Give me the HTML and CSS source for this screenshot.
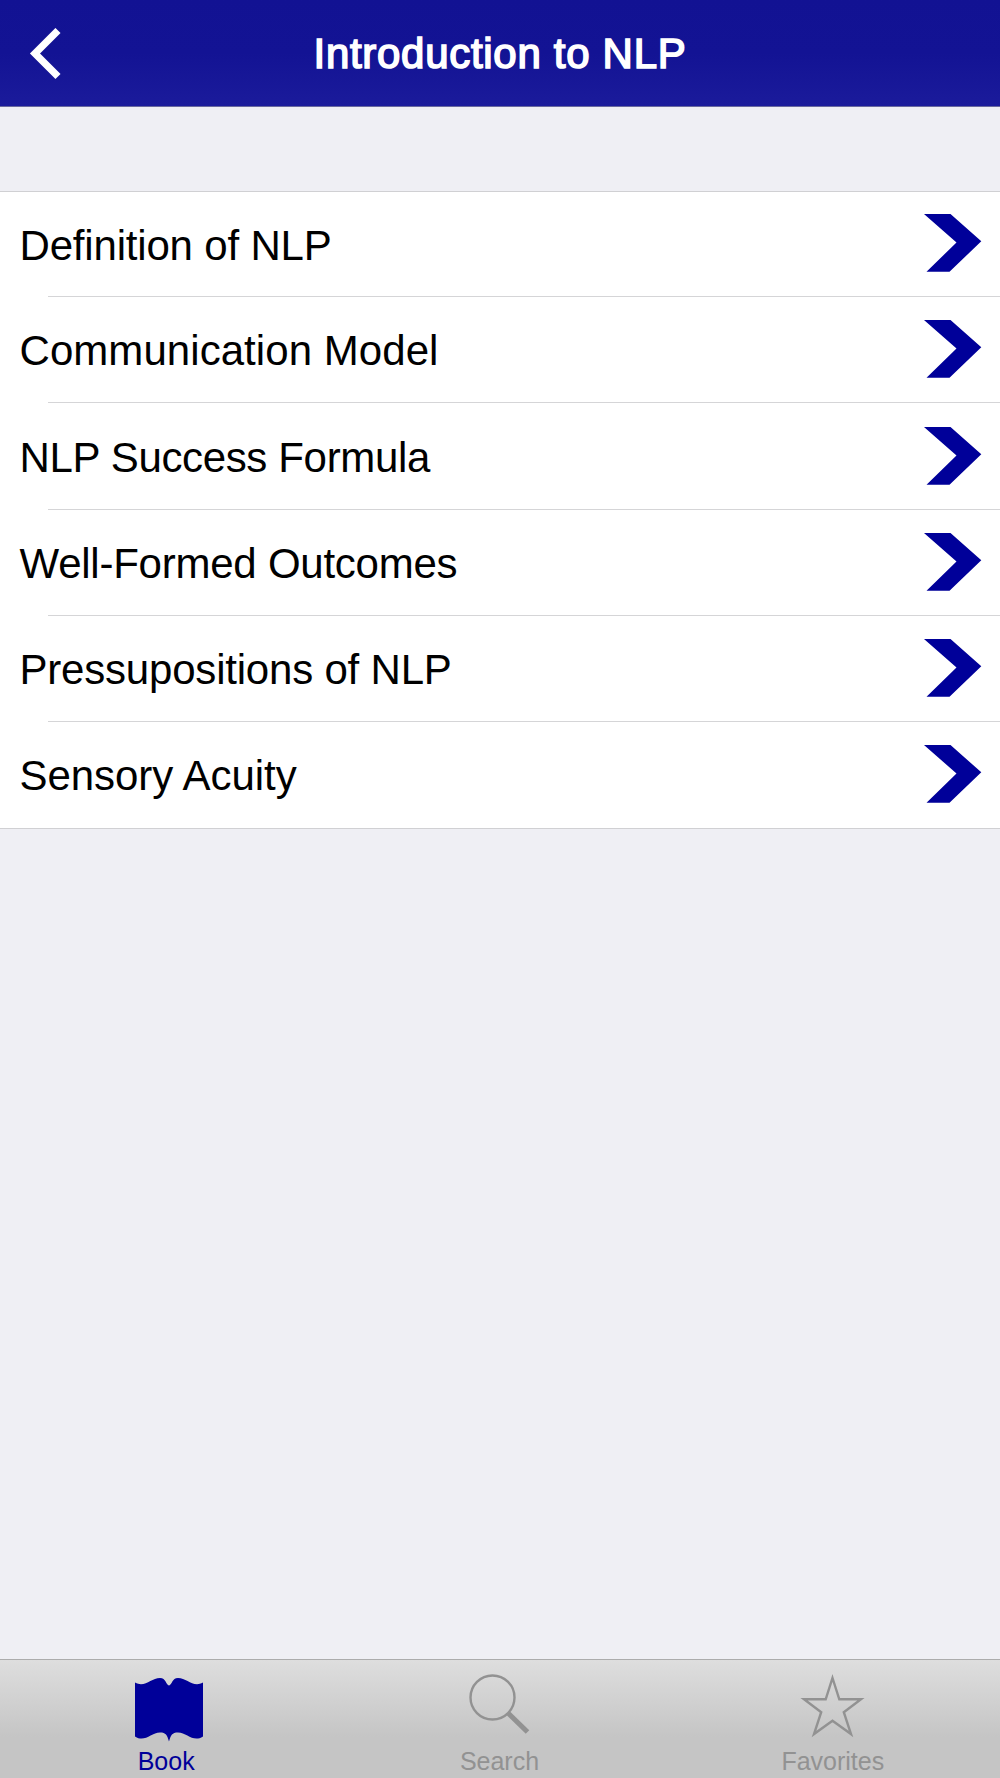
FILE: index.html
```html
<!DOCTYPE html>
<html lang="en">
<head>
    <meta charset="UTF-8">
    <meta name="viewport" content="width=device-width, initial-scale=1.0">
    <title>Introduction to NLP</title>
    <link rel="stylesheet" href="styles.css">
</head>
<body>
    <!-- Shared arrow for the list rows -->
    <svg width="0" height="0" class="symbols">
        <symbol id="arrow" viewBox="0 0 58 58">
            <path d="M0 0H26.500L57.300 27.300L25.500 57.700H2.500L32.500 28.500Z" fill="#000099"/>
        </symbol>
    </svg>

    <header class="navbar">
        <button class="back" aria-label="Back">
            <svg width="32" height="52" viewBox="0 0 32 52">
                <path d="M29 2.500L6 25.500L29 48.500" fill="none" stroke="#fff" stroke-width="7.200"/>
            </svg>
        </button>
        <h1 class="title">Introduction to NLP</h1>
    </header>

    <main class="content">
        <ul class="list">
            <li class="row"><span class="label definition">Definition of NLP</span><svg class="arrow"><use href="#arrow"/></svg></li>
            <li class="row"><span class="label communication">Communication Model</span><svg class="arrow"><use href="#arrow"/></svg></li>
            <li class="row"><span class="label success">NLP Success Formula</span><svg class="arrow"><use href="#arrow"/></svg></li>
            <li class="row"><span class="label outcomes">Well-Formed Outcomes</span><svg class="arrow"><use href="#arrow"/></svg></li>
            <li class="row"><span class="label pressupositions">Pressupositions of NLP</span><svg class="arrow"><use href="#arrow"/></svg></li>
            <li class="row"><span class="label sensory">Sensory Acuity</span><svg class="arrow"><use href="#arrow"/></svg></li>
        </ul>
    </main>

    <nav class="tabbar">
        <a class="tab active">
            <svg class="icon book" width="68" height="66" viewBox="0 0 68 66">
                <path d="M0 4.500C10 10 16 0 25 0C31 0 31 7 34 7.500C37 7 37 0 43 0C52 0 58 10 68 4.500V58.500C58 65 52 54.500 43 54.500C37 54.500 36 57 34 63.500C32 57 31 54.500 25 54.500C16 54.500 10 65 0 58.500Z" fill="#000099"/>
            </svg>
            <span>Book</span>
        </a>
        <a class="tab">
            <svg class="icon" width="68" height="66" viewBox="0 0 68 66">
                <circle cx="26.500" cy="23.500" r="22" fill="none" stroke="#929292" stroke-width="2.400"/>
                <path d="M42 39L61.500 58" stroke="#929292" stroke-width="5"/>
            </svg>
            <span>Search</span>
        </a>
        <a class="tab">
            <svg class="icon" width="68" height="66" viewBox="0 0 68 66">
                <path d="M33.500 4L40.300 25.300H62L44.800 38.200L52 60L33.500 46.700L15 60L22.200 38.200L5 25.300H26.700Z" fill="none" stroke="#929292" stroke-width="2.400" stroke-miterlimit="10"/>
            </svg>
            <span>Favorites</span>
        </a>
    </nav>
</body>
</html>
```
FILE: styles.css
```css
* {
    box-sizing: border-box;
}
body {
    display: flex;
    flex-direction: column;
    height: 1778px;
    margin: 0;
    background: #efeff4;
    font-family: "Liberation Sans", Arial, sans-serif;
}
.symbols {
    display: none;
}
.navbar {
    display: grid;
    grid-template-columns: 90px 1fr 90px;
    align-items: center;
    height: 107px;
    padding-top: 2px;
    background: linear-gradient(#121293 0%, #131394 50%, #1b1b9b 100%);
    border-bottom: 1px solid #68689f;
}
.back {
    padding: 0 0 0 29px;
    border: 0;
    background: none;
    text-align: left;
}
.back svg {
    display: block;
}
.title {
    margin: 0;
    color: #fff;
    font-size: 42px;
    font-weight: normal;
    letter-spacing: 0.7px;
    text-align: center;
    -webkit-text-stroke: 1.6px #fff;
}
.content {
    flex: 1;
    padding-top: 84px;
}
.list {
    margin: 0;
    padding: 0;
    list-style: none;
    background: #fff;
    border-top: 1px solid #d0d0d3;
    border-bottom: 1px solid #d0d0d3;
}
.row {
    display: flex;
    justify-content: space-between;
    align-items: center;
    height: 106.2px;
    padding: 0 18px 0 19.5px;
    background: linear-gradient(#d5d5d7, #d5d5d7) 48px 100% / 100% 1px no-repeat;
}
.row:first-child {
    height: 105.2px;
}
.row:last-child {
    height: 106px;
    background: none;
}
.label {
    padding-top: 2.4px;
    font-size: 42px;
    line-height: 48px;
    white-space: nowrap;
}
.definition {
    letter-spacing: -0.18px;
}
.communication {
    letter-spacing: 0.06px;
}
.success {
    letter-spacing: -0.35px;
}
.outcomes {
    letter-spacing: -0.24px;
}
.pressupositions {
    letter-spacing: -0.2px;
}
.sensory {
    letter-spacing: -0.05px;
}
.arrow {
    width: 58px;
    height: 58px;
    margin-bottom: 1.6px;
}
.row:first-child .arrow {
    margin-bottom: 3px;
}
.tabbar {
    display: flex;
    height: 119px;
    border-top: 1px solid #acacac;
    background: linear-gradient(#dedede, #c5c5c5 65%, #c5c5c5);
}
.tab {
    display: flex;
    flex: 1;
    flex-direction: column;
    align-items: center;
    padding-top: 14px;
    color: #929292;
    font-size: 25px;
    line-height: 28px;
}
.tab span {
    padding-right: 1px;
}
.tab.active {
    color: #000099;
}
.icon {
    margin-bottom: 7px;
}
.book {
    margin: 4px 0 3px 5px;
}
```
